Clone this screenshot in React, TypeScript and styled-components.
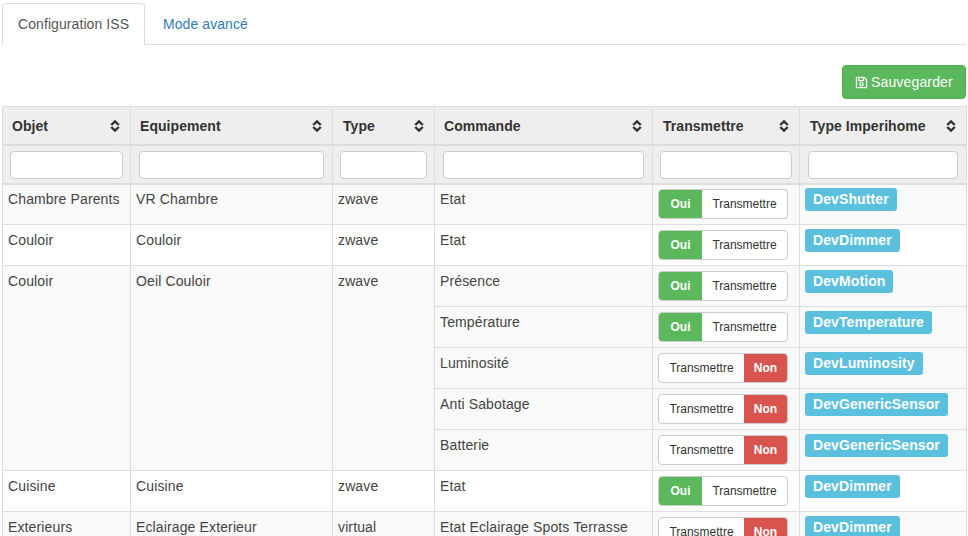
import React from "react";
import styled, { createGlobalStyle } from "styled-components";
import { FaRegSave } from "react-icons/fa";

const GlobalStyle = createGlobalStyle`
  html, body {
    margin: 0;
    padding: 0;
    background: #fff;
    overflow: hidden;
  }
  body {
    font-family: "Liberation Sans", Arial, sans-serif;
    font-size: 14px;
    line-height: 20px;
    color: #333;
  }
`;

const Page = styled.div`
  width: 968px;
  height: 536px;
  padding: 3px 2px 0;
  box-sizing: border-box;
  overflow: hidden;
`;

const Tabs = styled.ul`
  display: flex;
  box-sizing: border-box;
  list-style: none;
  margin: 0;
  padding: 0;
  height: 42px;
  border-bottom: 1px solid #ddd;
  width: 964px;
`;

const Tab = styled.li<{ $active?: boolean }>`
  box-sizing: border-box;
  height: ${(p) => (p.$active ? "42px" : "41px")};
  padding: 10px 15px 0;
  margin-right: 2px;
  font-size: 14px;
  letter-spacing: 0.08px;
  white-space: nowrap;
  color: ${(p) => (p.$active ? "#555" : "#337ab7")};
  background: ${(p) => (p.$active ? "#fff" : "transparent")};
  border: 1px solid ${(p) => (p.$active ? "#ddd" : "transparent")};
  border-bottom: ${(p) => (p.$active ? "1px solid #fff" : "none")};
  border-radius: 4px 4px 0 0;
  ${(p) => (p.$active ? "width: 143px;" : "")}
`;

const Actions = styled.div`
  display: flex;
  justify-content: flex-end;
  padding-top: 20px;
  height: 61px;
  box-sizing: border-box;
`;

const SaveButton = styled.button`
  display: flex;
  align-items: center;
  gap: 3px;
  box-sizing: border-box;
  height: 34px;
  width: 124px;
  padding: 0 12px;
  font-family: inherit;
  font-size: 14px;
  letter-spacing: 0.15px;
  color: #fff;
  background: #5cb85c;
  border: 1px solid #4cae4c;
  border-radius: 4px;
`;

const Grid = styled.table`
  border-collapse: collapse;
  table-layout: fixed;
  width: 964px;
`;

const HeadCell = styled.th`
  box-sizing: border-box;
  height: 38px;
  padding: 2px 10px 0 9px;
  background: #eee;
  border: 1px solid #ddd;
  border-bottom-width: 2px;
  text-align: left;
  font-size: 14px;
  font-weight: 700;
  letter-spacing: 0.05px;
  color: #333;

  &:nth-child(3),
  &:nth-child(5),
  &:nth-child(6) {
    padding-left: 10px;
  }
`;

const HeadInner = styled.div`
  display: flex;
  align-items: center;
  justify-content: space-between;
`;

const FilterCell = styled.td`
  box-sizing: border-box;
  height: 37px;
  padding: 5px 7px 4px;
  background: #eee;
  border: 1px solid #ddd;
  border-bottom-width: 2px;

  &:nth-child(even) {
    padding: 5px 8px 4px;
  }
`;

const FilterInput = styled.input`
  display: block;
  box-sizing: border-box;
  width: 100%;
  height: 28px;
  background: #fff;
  border: 1px solid #ccc;
  border-radius: 4px;
`;

const Cell = styled.td`
  box-sizing: border-box;
  height: 41px;
  padding: 5px 5px 4px;
  border: 1px solid #ddd;
  vertical-align: top;
  font-size: 14px;
  line-height: 20px;
  letter-spacing: 0.13px;
  color: #444;
  white-space: nowrap;
  overflow: hidden;
`;

const Row = styled.tr<{ $striped?: boolean }>`
  background: ${(p) => (p.$striped ? "#f9f9f9" : "#fff")};

  &:first-child ${Cell} {
    padding-top: 4px;
  }
`;

const Toggle = styled.div`
  display: inline-flex;
  box-sizing: border-box;
  width: 130px;
  height: 30px;
  background: #fff;
  border: 1px solid #ccc;
  border-radius: 4px;
  overflow: hidden;
  font-size: 12px;
  line-height: 28px;
  letter-spacing: 0;
  vertical-align: top;
`;

const ToggleLabel = styled.span`
  flex: 1;
  text-align: center;
  color: #333;
`;

const ToggleState = styled.span<{ $on: boolean }>`
  width: 43px;
  text-align: center;
  font-weight: 700;
  color: #fff;
  background: ${(p) => (p.$on ? "#5cb85c" : "#d9534f")};
`;

const TypeBadge = styled.span`
  display: inline-block;
  height: 23px;
  margin-top: -1px;
  padding: 0 8px;
  background: #5bc0de;
  border-radius: 3px;
  font-size: 14px;
  font-weight: 700;
  line-height: 22px;
  letter-spacing: 0.1px;
  color: #fff;
  vertical-align: top;
`;

const SortIcon = () => (
  <svg width="10" height="14" viewBox="0 0 10 14" aria-hidden="true">
    <path
      d="M1.200 6 5 2.300 8.800 6M1.200 8 5 11.700 8.800 8"
      fill="none"
      stroke="#333"
      strokeWidth="2.400"
    />
  </svg>
);

const columns = [
  { label: "Objet", width: 128 },
  { label: "Equipement", width: 202 },
  { label: "Type", width: 102 },
  { label: "Commande", width: 218 },
  { label: "Transmettre", width: 147 },
  { label: "Type Imperihome", width: 167 },
];

type Cmd = { name: string; on: boolean; type: string };
type Group = { objet: string; equip: string; kind: string; cmds: Cmd[] };

const groups: Group[] = [
  {
    objet: "Chambre Parents",
    equip: "VR Chambre",
    kind: "zwave",
    cmds: [{ name: "Etat", on: true, type: "DevShutter" }],
  },
  {
    objet: "Couloir",
    equip: "Couloir",
    kind: "zwave",
    cmds: [{ name: "Etat", on: true, type: "DevDimmer" }],
  },
  {
    objet: "Couloir",
    equip: "Oeil Couloir",
    kind: "zwave",
    cmds: [
      { name: "Présence", on: true, type: "DevMotion" },
      { name: "Température", on: true, type: "DevTemperature" },
      { name: "Luminosité", on: false, type: "DevLuminosity" },
      { name: "Anti Sabotage", on: false, type: "DevGenericSensor" },
      { name: "Batterie", on: false, type: "DevGenericSensor" },
    ],
  },
  {
    objet: "Cuisine",
    equip: "Cuisine",
    kind: "zwave",
    cmds: [{ name: "Etat", on: true, type: "DevDimmer" }],
  },
  {
    objet: "Exterieurs",
    equip: "Eclairage Exterieur",
    kind: "virtual",
    cmds: [{ name: "Etat Eclairage Spots Terrasse", on: false, type: "DevDimmer" }],
  },
];

const App: React.FC = () => {
  return (
    <Page>
      <GlobalStyle />
      <Tabs>
        <Tab $active>Configuration ISS</Tab>
        <Tab>Mode avancé</Tab>
      </Tabs>
      <Actions>
        <SaveButton>
          <FaRegSave size={13} />
          Sauvegarder
        </SaveButton>
      </Actions>
      <Grid>
        <colgroup>
          {columns.map((c) => (
            <col key={c.label} style={{ width: c.width }} />
          ))}
        </colgroup>
        <thead>
          <tr>
            {columns.map((c) => (
              <HeadCell key={c.label}>
                <HeadInner>
                  {c.label}
                  <SortIcon />
                </HeadInner>
              </HeadCell>
            ))}
          </tr>
          <tr>
            {columns.map((c) => (
              <FilterCell key={c.label}>
                <FilterInput type="text" />
              </FilterCell>
            ))}
          </tr>
        </thead>
        <tbody>
          {groups.map((g, gi) =>
            g.cmds.map((cmd, i) => (
              <Row key={`${gi}-${i}`} $striped={gi % 2 === 0}>
                {i === 0 && (
                  <>
                    <Cell rowSpan={g.cmds.length}>{g.objet}</Cell>
                    <Cell rowSpan={g.cmds.length}>{g.equip}</Cell>
                    <Cell rowSpan={g.cmds.length}>{g.kind}</Cell>
                  </>
                )}
                <Cell>{cmd.name}</Cell>
                <Cell>
                  <Toggle>
                    {cmd.on && <ToggleState $on>Oui</ToggleState>}
                    <ToggleLabel>Transmettre</ToggleLabel>
                    {!cmd.on && <ToggleState $on={false}>Non</ToggleState>}
                  </Toggle>
                </Cell>
                <Cell>
                  <TypeBadge>{cmd.type}</TypeBadge>
                </Cell>
              </Row>
            )),
          )}
        </tbody>
      </Grid>
    </Page>
  );
};

export default App;
